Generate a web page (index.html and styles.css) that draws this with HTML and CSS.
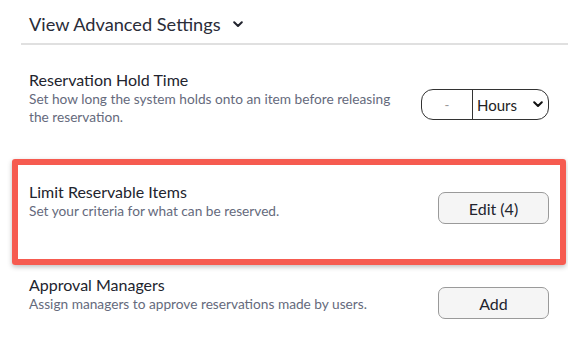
FILE: index.html
```html
<!DOCTYPE html>
<html>
<head>
<meta charset="utf-8">
<link rel="stylesheet" href="styles.css">
</head>
<body>
<div class="page">
  <div class="header">
    <span class="header-text">View Advanced Settings</span>
    <svg class="header-chev" width="10" height="7" viewBox="0 0 10 7"><path d="M1.2 1.2 L5 5 L8.8 1.2" fill="none" stroke="#22242e" stroke-width="2" stroke-linecap="round" stroke-linejoin="round"/></svg>
  </div>
  <div class="divider"></div>

  <div class="row row-hold">
    <div class="text">
      <div class="title">Reservation Hold Time</div>
      <div class="desc">Set how long the system holds onto an item before releasing the reservation.</div>
    </div>
    <div class="group">
      <div class="group-num">-</div>
      <div class="group-sel">
        <span>Hours</span>
        <svg width="10" height="7" viewBox="0 0 10 7"><path d="M1.2 1.2 L5 5 L8.8 1.2" fill="none" stroke="#111" stroke-width="2" stroke-linecap="round" stroke-linejoin="round"/></svg>
      </div>
    </div>
  </div>

  <div class="row row-limit">
    <div class="text">
      <div class="title">Limit Reservable Items</div>
      <div class="desc">Set your criteria for what can be reserved.</div>
    </div>
    <button class="btn btn-edit">Edit (4)</button>
  </div>

  <div class="row row-approve">
    <div class="text">
      <div class="title">Approval Managers</div>
      <div class="desc">Assign managers to approve reservations made by users.</div>
    </div>
    <button class="btn btn-add">Add</button>
  </div>

  <div class="highlight"></div>
</div>
</body>
</html>
```
FILE: styles.css
```css
html, body {
  margin: 0;
  padding: 0;
  background: #ffffff;
}
body {
  width: 568px;
  height: 362px;
  overflow: hidden;
  font-family: Lato, "Open Sans", sans-serif;
}
.page {
  position: relative;
  width: 568px;
  height: 362px;
}
.header {
  display: flex;
  align-items: center;
  height: 43px;
  padding-left: 29px;
  padding-top: 4px;
  box-sizing: border-box;
}
.header-text {
  font-size: 18.2px;
  color: #2a2c38;
}
.header-chev {
  margin-left: 12px;
  margin-top: 1px;
}
.divider {
  margin-left: 21px;
  height: 2px;
  background: #e0e0e0;
}
.row {
  display: flex;
  align-items: flex-start;
  justify-content: space-between;
  padding-left: 29px;
  padding-right: 19px;
}
.text {
  width: 370px;
}
.title {
  font-size: 16px;
  color: #22242e;
  line-height: 20px;
}
.desc {
  font-size: 13.7px;
  color: #656a7c;
  line-height: 18px;
}
.row-hold {
  margin-top: 25px;
}
.row-limit {
  margin-top: 56px;
}
.row-approve {
  margin-top: 51px;
}
.group {
  display: flex;
  width: 128px;
  height: 31px;
  box-sizing: border-box;
  border: 1px solid #333;
  border-radius: 12px;
  margin-top: 19px;
  overflow: hidden;
}
.group-num {
  width: 50px;
  border-right: 1px solid #333;
  display: flex;
  align-items: center;
  justify-content: center;
  color: #999;
  font-size: 13px;
}
.group-sel {
  flex: 1;
  display: flex;
  align-items: center;
  justify-content: space-between;
  padding-left: 4px;
  padding-right: 5px;
  font-size: 15px;
  color: #222;
}
.btn {
  width: 111px;
  height: 32px;
  border: 1px solid #9a9a9a;
  border-radius: 7px;
  background: #f5f5f5;
  font-family: Lato, "Open Sans", sans-serif;
  font-size: 16px;
  color: #22242e;
  padding: 0;
}
.btn-edit {
  margin-top: 10px;
}
.btn-add {
  margin-top: 12px;
}
.highlight {
  position: absolute;
  left: 12px;
  top: 159px;
  width: 554px;
  height: 106px;
  box-sizing: border-box;
  border: 6px solid #f65b50;
  border-radius: 3px;
  box-shadow: 0 2px 5px rgba(0,0,0,0.25);
}
```
